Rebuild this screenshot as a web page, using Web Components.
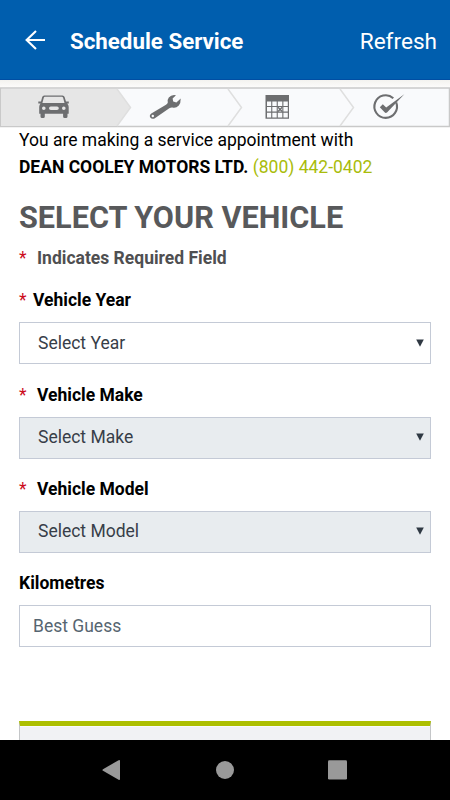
<!DOCTYPE html>
<html lang="en">
<head>
<meta charset="utf-8">
<title>Schedule Service</title>
<style>
html,body{margin:0;height:100%}
body{font-family:Roboto,"Liberation Sans",sans-serif;background:#fff;color:#000;overflow:hidden}
</style>
</head>
<body>
<service-app></service-app>
<script>
const define = (name, html, setup) => {
  const t = document.createElement('template');
  t.innerHTML = html;
  customElements.define(name, class extends HTMLElement {
    constructor() {
      super();
      this.attachShadow({mode: 'open'}).append(t.content.cloneNode(true));
    }
    connectedCallback() { if (setup) setup(this, this.shadowRoot); }
  });
};

define('app-bar', `
<style>
:host{display:flex;align-items:center;box-sizing:border-box;height:80px;padding:3px 13px 0 25px;background:#005eae;border-bottom:1px solid #004ea3;color:#fff;font-size:22.3px;line-height:28px}
svg{display:block;width:20px;height:20px;margin-right:25px;margin-top:-2px}
.title{font-weight:700;flex:1}
.action{font-size:22.6px;padding-top:2px}
</style>
<svg viewBox="0 0 20 20" fill="none" stroke="#fff" stroke-width="2.1"><path d="M20 10H2M11 .9L1.6 10L11 19.1"/></svg>
<span class="title"><slot></slot></span><span class="action"><slot name="action"></slot></span>`);

define('step-bar', `
<style>
:host{display:block;height:48px;background:linear-gradient(#f3f2ef,#fcfbfa 7px,#fff 8px)}
svg{display:block}
</style>
<svg width="450" height="48" viewBox="0 80 450 48">
<rect x=".5" y="88" width="449" height="38.5" fill="#f9fafc" stroke="#c9c9c9" stroke-width="1.5"/>
<path d="M1 89H117L130.5 107.5L117 126H1z" fill="#e6e6e6"/>
<g fill="none" stroke="#dfdfdf" stroke-width="1.5"><path d="M117 89L130.5 107.5L117 126M228 89L241.5 107.5L228 126M340 89L353.5 107.5L340 126"/></g>
<g fill="#6d6e70">
<path fill-rule="evenodd" d="M44.2 95.4H62.5Q64.1 95.4 64.6 97L66 101.5H68.8V103.5H67.2Q68.7 105 68.7 107V113.8H67.5V116.5Q67.5 118 66 118H64.6Q63.1 118 63.1 116.5V113.8H44.8V116.5Q44.8 118 43.3 118H42Q40.5 118 40.5 116.5V113.8H39.2V107Q39.2 105 40.5 103.5H38.3V101.5H41L42.2 97Q42.7 95.4 44.2 95.4zM45 96.8Q44 96.8 43.8 97.7L42.4 103H64.5L63.1 97.7Q62.8 96.8 61.8 96.8zM43.8 106.4A1.8 1.8 0 1 0 43.8 110A1.8 1.8 0 1 0 43.8 106.4zM63.8 106.4A1.8 1.8 0 1 0 63.8 110A1.8 1.8 0 1 0 63.8 106.4zM50.8 106.4A1.8 1.8 0 0 0 50.8 110H57A1.8 1.8 0 0 0 57 106.4z"/>
<path fill-rule="evenodd" d="M176 95.2Q171.5 94.2 168.8 97.5Q167 99.8 167.8 102.6Q167.5 103.8 166 104.7L151.3 113.5Q149 115.2 150.3 117.6Q152 119.6 154.5 118.4L169.3 108.2Q171 107.2 172.5 107.5Q176 108.3 178.8 105.5Q180.8 103.3 180.7 98.4L176.4 102.6L173.2 101.6L172.6 98.6zM152.8 114.8A1.2 1.2 0 1 1 152.8 117.2A1.2 1.2 0 1 1 152.8 114.8z"/>
<path fill-rule="evenodd" d="M265.5 95H289V118.7H265.5zM267 101.6V105.9H271.2V101.6zM272.3 101.6V105.9H276.7V101.6zM277.8 101.6V105.9H282.3V101.6zM283.4 101.6V105.9H287.8V101.6zM267 107.1V111.6H271.2V107.1zM272.3 107.1V111.6H276.7V107.1zM277.8 107.1V111.6H282.3V107.1zM283.4 107.1V111.6H287.8V107.1zM267 112.8V117.4H271.2V112.8zM272.3 112.8V117.4H276.7V112.8zM277.8 112.8V117.4H282.3V112.8zM283.4 112.8V117.4H287.8V112.8z"/>
<path d="M379.8 107.3L382.8 104.3L386.2 107.4L404.3 94.2L387 112.4Q385.7 113.4 384.6 112.3z"/>
</g>
<path d="M278 107.2L282.2 111.5M282.2 107.2L278 111.5" stroke="#6d6e70" stroke-width="1.3"/>
<path d="M393.3 98.2A11.3 11.3 0 1 0 396.2 102.4" fill="none" stroke="#6d6e70" stroke-width="2.1"/>
</svg>`);

define('page-intro', `
<style>
:host{display:block;font-size:17.5px;line-height:26.25px;margin-top:-.7px}
p{margin:0}
b{font-weight:700}
::slotted([slot=phone]){color:#a9bc0b}
h1{margin:19px 0 0;font-size:30.65px;line-height:37px;font-weight:700;color:#58595b}
.req{margin-top:9.3px;font-weight:700;color:#4f4f51;display:flex}
i{font-style:normal;font-weight:400;color:#cc0c1c;width:18px}
</style>
<p class="lead"><slot name="lead"></slot></p>
<p><b><slot name="dealer"></slot></b> <slot name="phone"></slot></p>
<h1><slot></slot></h1>
<p class="req"><i>*</i><span><slot name="note"></slot></span></p>`);

define('form-field', `
<style>
:host{display:block;font-size:17.5px;line-height:26px}
.label{display:flex;font-weight:700;height:26px;margin-bottom:9px}
.label i{font-style:normal;font-weight:400;color:#cc0c1c;width:18px}
:host([tight]) .label i{width:14px}
.box{box-sizing:border-box;height:42px;border:1px solid #c4cad6;display:flex;align-items:center;justify-content:space-between;padding:0 6px 1px 18px;color:#373e48;background:#fff}
:host([disabled]) .box{background:#e8ecef}
:host([plain]) .box{padding-left:13px;color:#566571}
:host([plain]) svg,:host([plain]) i{display:none}
svg{display:block;width:8px;height:8px}
</style>
<div class="label"><i>*</i><span class="name"></span></div>
<div class="box"><span><slot></slot></span><svg viewBox="0 0 8 8"><path d="M.2 .4H7.8L4 7.8z" fill="#2f3943"/></svg></div>`,
(el, root) => { root.querySelector('.name').textContent = el.getAttribute('label'); });

define('next-panel', `
<style>:host{display:block;box-sizing:border-box;height:60px;background:#f1f2f4;border:1px solid #c4c6c8;border-top:5px solid #adbf00;box-shadow:inset 0 1px #fafafb}</style><slot></slot>`);

define('nav-bar', `
<style>:host{display:block;height:60px;background:#000}svg{display:block}</style>
<svg width="450" height="60" fill="#999"><path d="M103 29.2L118.6 20.2Q120 19.6 120 21V39Q120 40.4 118.6 39.8L103 30.8Q101.8 30 103 29.2z"/><circle cx="225" cy="30" r="9"/><rect x="328" y="20.3" width="19" height="19.2" rx="1.3"/></svg>`);

define('service-app', `
<style>
:host{display:flex;flex-direction:column;height:800px;width:450px}
main{flex:1;min-height:0;overflow:hidden;padding:0 19px;display:flow-root}
.fields{display:grid;row-gap:17.35px;margin-top:15.8px}
next-panel{margin-top:74px}
</style>
<app-bar>Schedule Service<span slot="action">Refresh</span></app-bar>
<step-bar></step-bar>
<main>
<page-intro><span slot="lead">You are making a service appointment with</span><span slot="dealer">DEAN COOLEY MOTORS LTD.</span><span slot="phone">(800) 442-0402</span>SELECT YOUR VEHICLE<span slot="note">Indicates Required Field</span></page-intro>
<div class="fields">
<form-field label="Vehicle Year" tight>Select Year</form-field>
<form-field label="Vehicle Make" disabled>Select Make</form-field>
<form-field label="Vehicle Model" disabled>Select Model</form-field>
<form-field label="Kilometres" plain>Best Guess</form-field>
</div>
<next-panel></next-panel>
</main>
<nav-bar></nav-bar>`);
</script>
</body>
</html>
